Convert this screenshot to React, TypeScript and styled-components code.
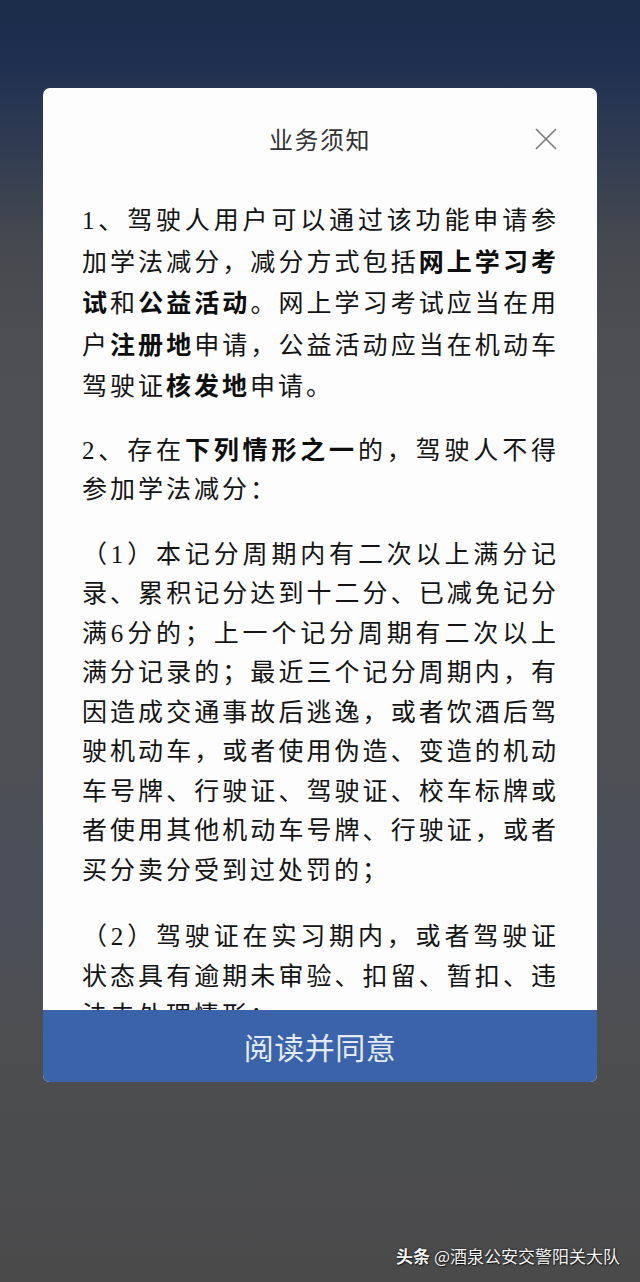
import React from 'react'
import styled, { createGlobalStyle } from 'styled-components'

const GlobalStyle = createGlobalStyle`
  html, body {
    margin: 0;
    padding: 0;
  }
  body {
    font-family: "Noto Sans CJK SC", "Noto Sans", sans-serif;
    background: #4b4c4e;
  }
`

const paragraphs: { text: React.ReactNode; gap: number }[] = [
  {
    gap: 22,
    text: (
      <>
        1、驾驶人用户可以通过该功能申请参加学法减分，减分方式包括<b>网上学习考试</b>和<b>公益活动</b>。网上学习考试应当在用户<b>注册地</b>申请，公益活动应当在机动车驾驶证<b>核发地</b>申请。
      </>
    )
  },
  {
    gap: 25,
    text: (
      <>
        2、存在<b>下列情形之一</b>的，驾驶人不得参加学法减分：
      </>
    )
  },
  {
    gap: 27,
    text: '（1）本记分周期内有二次以上满分记录、累积记分达到十二分、已减免记分满6分的；上一个记分周期有二次以上满分记录的；最近三个记分周期内，有因造成交通事故后逃逸，或者饮酒后驾驶机动车，或者使用伪造、变造的机动车号牌、行驶证、驾驶证、校车标牌或者使用其他机动车号牌、行驶证，或者买分卖分受到过处罚的；'
  },
  {
    gap: 0,
    text: '（2）驾驶证在实习期内，或者驾驶证状态具有逾期未审验、扣留、暂扣、违法未处理情形；'
  }
]

const App = () => {
  return (
    <Screen>
      <GlobalStyle />
      <Modal>
        <Header>
          <Title>业务须知</Title>
          <CloseButton aria-label="关闭">
            <svg width="22" height="22" viewBox="0 0 22 22">
              <path d="M1 1 L21 21 M21 1 L1 21" stroke="#7a7a7a" strokeWidth="1.6" fill="none" />
            </svg>
          </CloseButton>
        </Header>
        <Body>
          {paragraphs.map((p, i) => (
            <Paragraph key={i} gap={p.gap}>
              {p.text}
            </Paragraph>
          ))}
        </Body>
        <AgreeButton>阅读并同意</AgreeButton>
      </Modal>
      <Watermark>
        <strong>头条</strong> @酒泉公安交警阳关大队
      </Watermark>
    </Screen>
  )
}

export default App

const Screen = styled.main`
  position: relative;
  width: 640px;
  height: 1282px;
  overflow: hidden;
  box-sizing: border-box;
  padding-top: 88px;

  display: flex;
  flex-direction: column;
  align-items: center;

  background: linear-gradient(
    180deg,
    #1b2b4a 0%,
    #1f3050 5%,
    #2f3b52 11%,
    #46494f 19%,
    #4f5053 30%,
    #4f5053 58%,
    #4a4f5a 67%,
    #4a4e58 72%,
    #4d4e50 80%,
    #4a4a4b 100%
  );
`

const Modal = styled.section`
  width: 554px;
  height: 994px;
  background: #fdfdfd;
  border-radius: 7px;
  overflow: hidden;

  display: flex;
  flex-direction: column;
`

const Header = styled.header`
  position: relative;
  height: 100px;
  flex: none;

  display: flex;
  align-items: center;
  justify-content: center;
`

const Title = styled.h1`
  margin: 0;
  font-size: 24px;
  font-weight: 400;
  letter-spacing: 1.5px;
  color: #333;
`

const CloseButton = styled.button`
  position: absolute;
  right: 40px;
  top: 40px;
  width: 22px;
  height: 22px;
  padding: 0;
  border: none;
  background: none;
  display: flex;
`

const Body = styled.div`
  flex: 1;
  overflow: hidden;
  padding: 13px 0 0 39px;
`

const Paragraph = styled.p<{ gap: number }>`
  width: 477px;
  margin: 0 0 ${props => props.gap}px;
  font-family: "Liberation Serif", "Noto Sans CJK SC", serif;
  font-size: 25px;
  line-height: 39.5px;
  letter-spacing: 3px;
  color: #141414;
  text-align: justify;

  b {
    font-family: "Noto Sans CJK SC", sans-serif;
    font-weight: 700;
    color: #0e0e0e;
  }
`

const AgreeButton = styled.button`
  flex: none;
  height: 72px;
  width: 100%;
  border: none;
  border-radius: 0 0 4px 4px;
  background: #3b63a9;
  color: #e3eaf5;
  font-family: "Noto Sans CJK SC", sans-serif;
  font-size: 30px;
  letter-spacing: 0.5px;
  padding: 0;
`

const Watermark = styled.div`
  position: absolute;
  right: 20px;
  bottom: 14px;
  font-size: 17px;
  color: #f4f4f4;
  text-shadow: 0 0 2px rgba(0, 0, 0, 0.8), 1px 1px 1px rgba(0, 0, 0, 0.6);

  strong {
    font-weight: 700;
  }
`
